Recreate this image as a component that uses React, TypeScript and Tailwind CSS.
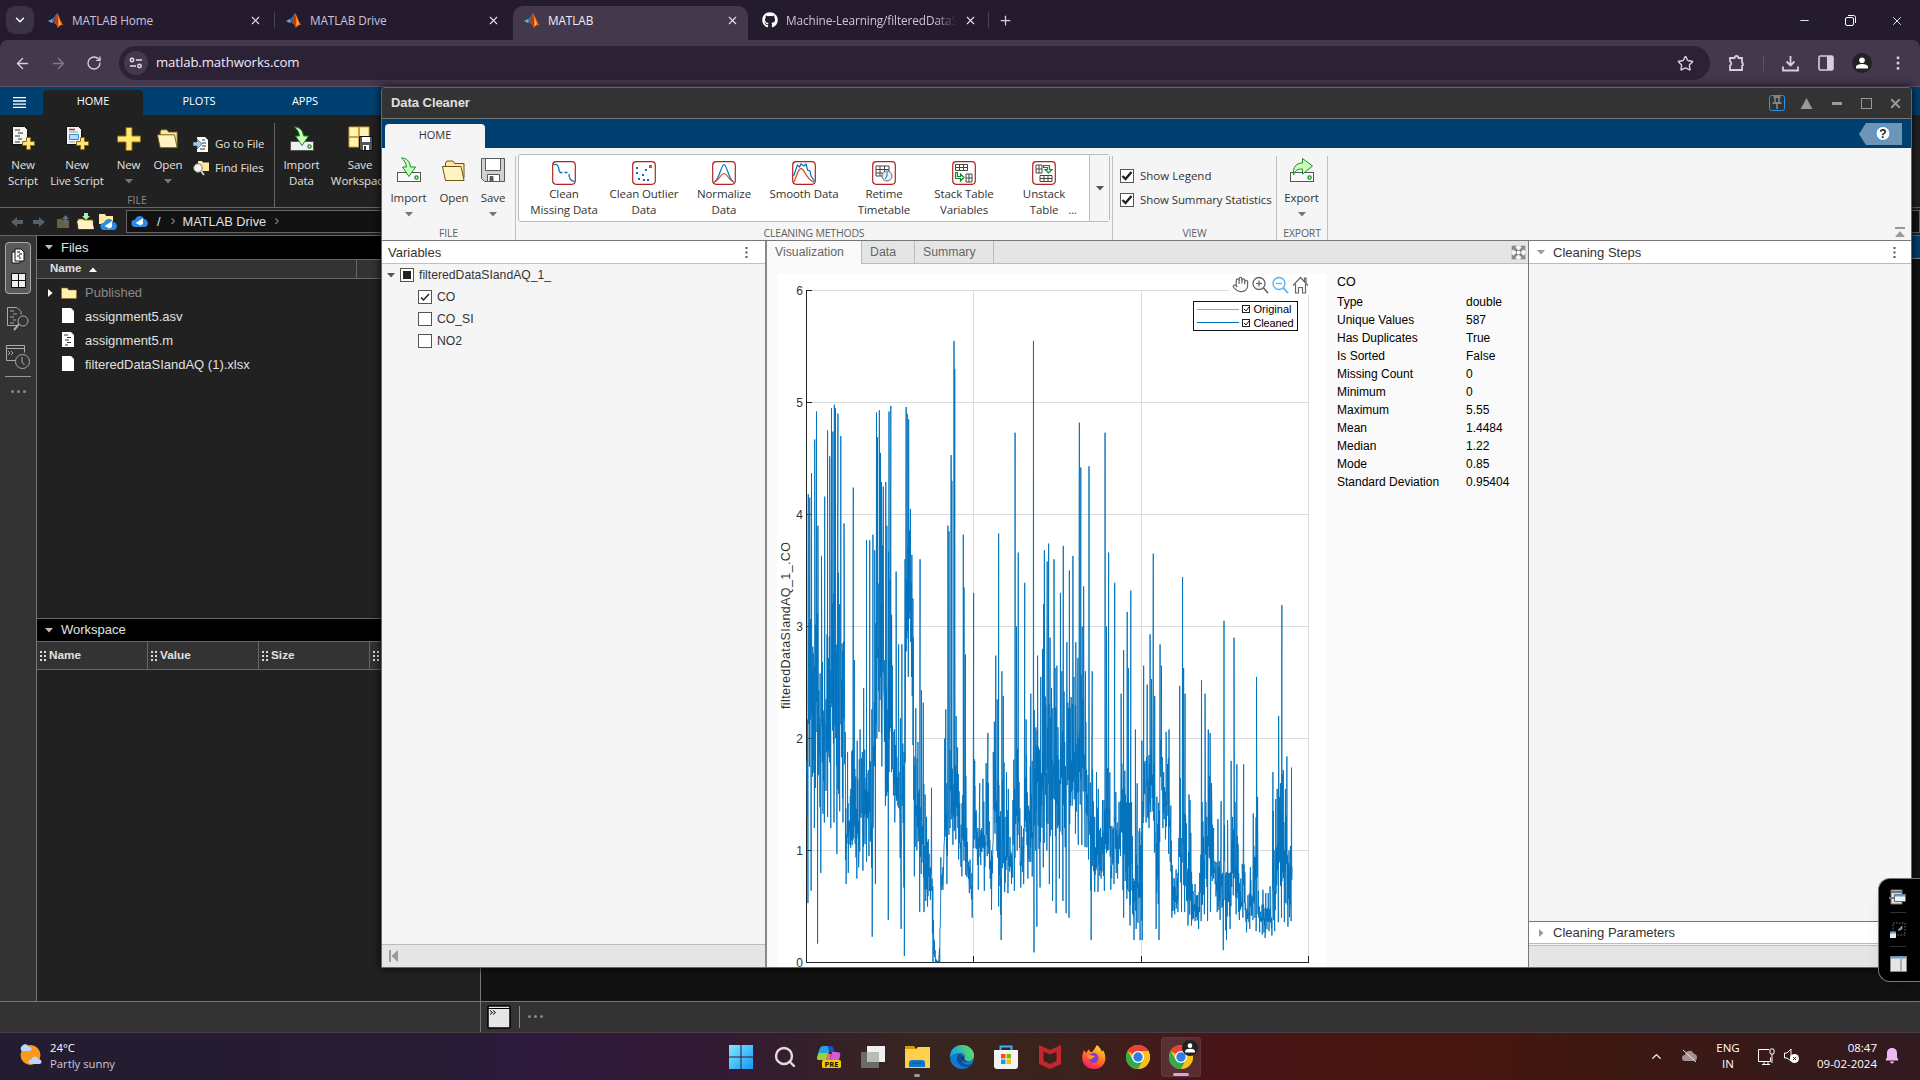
import React from "react";
import {
  ArrowLeft, ArrowRight, RotateCw, Star, X, Plus, ChevronDown, ChevronUp, MoreVertical, Minus,
  Search, Hand,
} from "lucide-react";
import { FaGithub } from "react-icons/fa";

const SEGOE = "font-['Open_Sans',sans-serif]";
const ARIAL = "font-['Liberation_Sans',sans-serif]";

/* ---------- chart data ---------- */

// [x, value] pairs: local maxima, x in plot units measured from 102 to 1462
const PEAKS: number[] = [
  103, 1.8, 107, 4.18, 111, 4.15, 116, 4.37, 121, 2.76, 125, 4.67, 130, 4.92, 134, 3.9, 140, 2.58, 144, 3.63, 149, 2.25, 153, 4.16, 157, 2.35, 161, 4.75, 167, 4.52, 172, 4.95, 176, 4.74,
  180, 4.98, 183, 4.95, 190, 4.9, 194, 3.2, 198, 4.7, 203, 2.78, 207, 3.92, 211, 2, 217, 1.88, 226, 1.55, 233, 4.24, 236, 2.7, 240, 1.66, 244, 1.98, 252, 2.08, 262, 2.45, 265, 1.9, 270, 3.77, 275, 1.72,
  279, 3.77, 285, 2.26, 288, 3.82, 293, 3.68, 298, 4.91, 301, 4.69, 306, 4.93, 309, 4.55, 312, 4.29, 317, 4.25, 321, 2.7, 324, 4.29, 327, 3.9, 333, 4.92, 338, 4.97, 342, 2.6, 348, 2.08, 353, 3.49, 360, 2.84, 365, 2.18, 369, 2.84,
  375, 1.88, 378, 3.6, 381, 4.96, 384, 4.9, 388, 4.85, 393, 4.05, 397, 3.64, 400, 3.25, 408, 2.27, 414, 1.97, 420, 3.6, 424, 2.43, 429, 2.32, 434, 1.5, 438, 1.3, 443, 1.1, 452, 1.56, 457, 0.38, 462, 0.1, 466, 0.02, 472, 0.02, 478, 0.94,
  484, 0.85, 489, 2, 492, 2.26, 495, 1.6, 498, 3.9, 501, 3.85, 507, 4.53, 509, 4.3, 515, 5.55, 517, 5.3, 521, 2.2, 525, 1.92, 531, 1.42, 535, 1.23, 541, 3.82, 543, 3.35, 547, 2.75, 551, 1.2, 556, 0.9, 560, 0.92, 565, 0.8, 570, 3.3, 573, 1.8,
  577, 1.36, 582, 1.2, 587, 1.6, 592, 1.2, 596, 1.64, 605, 1.78, 610, 2.05, 614, 1.26, 620, 1, 625, 1.88, 628, 2.15, 632, 2.74, 636, 2.35, 640, 3.83, 645, 1.35, 649, 2.6, 653, 2.38, 658, 1.3, 662, 1.7, 667, 1.55, 672, 1.12, 680, 1.45,
  686, 4.73, 690, 3, 695, 3.66, 699, 1.2, 704, 1.22, 708, 1.12, 713, 3.39, 717, 2.17, 724, 1.4, 730, 2.4, 734, 1.8, 737.5, 5.55, 740, 2.25, 744, 2.1, 749, 2.74, 754, 1.9, 758, 2.55, 763, 2.8, 766, 3.2, 768, 3.68, 772, 2.3, 776, 3.58, 780, 3.74, 784, 2.9,
  788, 2.45, 795, 3.6, 798, 2.63, 803, 2.65, 806, 2.1, 813, 3.3, 817, 2.6, 821, 3.72, 825, 1.97, 831, 2.86, 838, 3.5, 843, 2.37, 848, 3.63, 851, 2.55, 856, 2.86, 862, 2.72, 866, 4.82, 870, 4.42, 874, 3, 878, 3.36, 883, 2.6, 888, 1.5,
  893, 4.43, 897, 1.38, 902, 2.6, 905, 1.3, 909, 1.3, 914, 1.7, 919, 1.55, 925, 1.2, 931, 1.45, 935, 1.45, 938, 4.73, 942, 3, 948, 3.66, 953, 1.2, 957, 1.22, 965, 3.39, 968, 1.3, 972, 1.25, 977, 1.43, 983, 2.4, 990, 2.79, 995, 1.5,
  1000, 3.13, 1003, 2.63, 1010, 3.32, 1014, 0.96, 1018, 0.75, 1023, 2.08, 1028, 1.6, 1035, 1.2, 1041, 1.98, 1046, 2.65, 1050, 1.8, 1056, 2.48, 1061, 1.85, 1064, 2.93, 1068, 2.53, 1073, 3.65, 1077, 2.38, 1083, 1.48, 1092, 2.84, 1096, 2.65,
  1102, 1.7, 1109, 2.06, 1117, 2.08, 1122, 1.4, 1126, 0.87, 1132, 0.75, 1137, 0.83, 1142, 0.8, 1147, 2.47, 1151, 0.8, 1155, 3.44, 1158, 2.63, 1162, 2.4, 1167, 0.8, 1173, 1.5, 1176, 1.45, 1182, 0.7, 1190, 0.7, 1197, 0.6, 1203, 0.8,
  1208, 2.52, 1212, 1.26, 1218, 2.4, 1223, 1.3, 1227, 2.08, 1232, 2.05, 1236, 1.6, 1242, 1.2, 1248, 0.9, 1254, 1.28, 1259, 0.85, 1263, 1.44, 1267, 0.8, 1271, 3.05, 1276, 0.8, 1281, 1.27, 1286, 0.8, 1291, 1.8, 1295, 1.3, 1299, 2.9,
  1303, 1, 1307, 1.77, 1312, 0.8, 1318, 0.75, 1322, 0.88, 1326, 1.77, 1330, 0.7, 1338, 0.6, 1345, 0.85, 1349, 0.6, 1353, 1.33, 1357, 0.9, 1362, 2.55, 1366, 0.85, 1370, 0.5, 1380, 0.65, 1388, 0.62, 1395, 0.62, 1400, 0.68, 1404, 0.4, 1408, 1.7,
  1412, 0.7, 1416, 1.46, 1420, 1.55, 1424, 2.2, 1429, 1.6, 1433, 3.19, 1437, 1.72, 1443, 1.55, 1447, 1.84, 1453, 1, 1457, 1.04, 1460, 1.74,
];

// [x, value] pairs: local minima
const LOWS: number[] = [
  102, 1.7, 106, 0.53, 115, 0.64, 124, 1.2, 133, 0.17, 142, 0.8, 152, 1.25, 161, 1.3, 170, 1.2, 179, 1.25, 187, 0.97, 195, 1.35, 204, 1.25, 213, 0.7, 219, 0.8, 230, 1.05, 243, 0.75, 248, 0.85, 260, 0.82, 270, 0.9, 277, 0.95,
  286, 0.23, 288, 1.2, 295, 0.7, 299, 2, 305, 2.06, 313, 1.75, 323, 1.4, 331, 0.38, 333, 1.7, 340, 1.7, 349, 1.25, 358, 1.4, 367, 0.3, 370, 1.5, 376, 0.06, 379, 2.4, 387, 2.55, 396, 2.55, 404, 0.77, 411, 1, 419, 0.45, 431, 0.45, 441, 0.5,
  449, 0.56, 456, 0, 464, 0, 475, 0, 477, 0.42, 484, 0.65, 495, 0.7, 504, 1.2, 512, 1.05, 520, 1.1, 528, 0.92, 537, 0.77, 548, 0.78, 558, 0.62, 566, 0.4, 573, 1.1, 583, 0.65, 590, 0.87, 600, 0.64, 608, 0.95, 620, 0.47, 630, 1.15, 640, 0.5,
  647, 0.2, 651, 0.85, 657, 0.63, 666, 0.62, 676, 0.7, 684, 0.64, 692, 1, 702, 0.67, 710, 0.7, 722, 0.75, 730, 0.9, 739, 0.09, 743, 1, 747, 0.32, 756, 0.67, 765, 0.85, 775, 1, 782, 0.7, 791, 0.55, 801, 0.44, 810, 0.75, 820, 0.55, 829, 0.44,
  837, 0.4, 841, 1.4, 846, 1.4, 855, 1.15, 863, 1.05, 873, 1.05, 882, 1.03, 892, 0.92, 899, 0.2, 903, 0.9, 909, 0.63, 918, 0.63, 927, 0.75, 936, 0.64, 945, 1, 954, 0.65, 963, 0.7, 973, 0.75, 981, 0.95, 990, 0.4, 999, 0.57, 1008, 0.33,
  1019, 0.2, 1025, 0.3, 1036, 0.2, 1042, 0.2, 1046, 1.3, 1053, 1.25, 1061, 1.2, 1072, 1.35, 1081, 0.3, 1089, 0.2, 1094, 1.7, 1100, 1.2, 1107, 1.1, 1116, 0.97, 1125, 0.4, 1133, 0.43, 1142, 0.45, 1152, 0.45, 1161, 0.45, 1170, 0.33, 1180, 0.33,
  1190, 0.37, 1200, 0.3, 1207, 0.37, 1216, 0.43, 1225, 0.37, 1233, 0.45, 1242, 0.75, 1252, 0.45, 1260, 0.38, 1269, 0.11, 1278, 0.2, 1288, 0.3, 1297, 0.6, 1305, 0.43, 1314, 0.38, 1324, 0.4, 1334, 0.27, 1343, 0.3, 1352, 0.38, 1361, 0.28,
  1371, 0.27, 1378, 0.25, 1386, 0.22, 1397, 0.28, 1405, 0.24, 1413, 0.28, 1423, 0.36, 1432, 0.4, 1440, 0.36, 1450, 0.32, 1459, 0.37,
];

function sample(points: number[], x: number) {
  for (let i = 2; i < points.length; i += 2) {
    if (x <= points[i]) {
      const t = (x - points[i - 2]) / (points[i] - points[i - 2]);
      return points[i - 1] + (points[i + 1] - points[i - 1]) * Math.max(0, t);
    }
  }
  return points[points.length - 1];
}

function buildSeries() {
  let seed = 7;
  const rand = () => ((seed = (seed * 16807) % 2147483647) / 2147483647);
  const pts: [number, number][] = [];
  for (let x = 104; x < 1461; x += 2.1) {
    const early = x < 210 || (x > 290 && x < 345) || (x > 378 && x < 402);
    const busy = x > 735 && x < 885;
    const cap = early ? 4.2 : busy ? 2.9 : 2.1;
    const floor = early ? 1.2 : busy ? 0.9 : 0;
    const lo = Math.max(floor, sample(LOWS, x));
    const hi = Math.min(cap, sample(PEAKS, x));
    const span = Math.max(0, hi - lo);
    pts.push([x, lo + span * (0.08 + 0.32 * rand())]);
    pts.push([x + 1, lo + span * (0.35 + 0.5 * rand())]);
  }
  for (let i = 0; i < PEAKS.length; i += 2) pts.push([PEAKS[i], PEAKS[i + 1]]);
  for (let i = 0; i < LOWS.length; i += 2) pts.push([LOWS[i], LOWS[i + 1]]);
  pts.sort((a, b) => a[0] - b[0]);
  return pts.map(([x, v]) => `${((x - 102) / 2.8 + 29.5).toFixed(2)},${(688.5 - v * 112).toFixed(1)}`).join(" ");
}

function Chart() {
  return (
    <svg width="549" height="693" className="block" fontFamily="Liberation Sans" fontSize="12" fill="#333">
      <g stroke="#dcdcdc" strokeWidth="1">
        {[1, 2, 3, 4, 5].map((v) => <line key={v} x1="30" x2="531" y1={688.5 - v * 112} y2={688.5 - v * 112} />)}
        <line x1="30" x2="452" y1="16.5" y2="16.5" />
        <line x1="196.5" x2="196.5" y1="16" y2="688" />
        <line x1="364.5" x2="364.5" y1="16" y2="688" />
        <line x1="531.5" x2="531.5" y1="21" y2="688" />
      </g>
      <g stroke="#222" strokeWidth="1">
        <path d="M29.500 16V688.500H532M196.500 688v-6M364.500 688v-6M531.500 688v-6" fill="none" />
        {[1, 2, 3, 4, 5, 6].map((v) => <line key={v} x1="29" x2="35" y1={688.5 - v * 112} y2={688.5 - v * 112} />)}
      </g>
      <polyline points={buildSeries()} fill="none" stroke="#0072bd" strokeWidth="0.9" strokeLinejoin="bevel" />
      {[0, 1, 2, 3, 4, 5, 6].map((v) => <text key={v} x="26" y={693 - v * 112} textAnchor="end">{v}</text>)}
      <text transform="translate(12.500 435) rotate(-90)" fontSize="12.500" textLength="167">filteredDataSIandAQ_1_.CO</text>
      <rect x="416.500" y="27.500" width="104" height="29" fill="#fff" stroke="#111" />
      <line x1="420" x2="462" y1="35.500" y2="35.500" stroke="#4dbeee" />
      <line x1="420" x2="462" y1="48.500" y2="48.500" stroke="#0072bd" />
      {[31.5, 45.5].map((y) => (
        <g key={y} fill="none" stroke="#222" strokeWidth="1">
          <rect x="465.500" y={y} width="7" height="7" />
          <path d={`M467 ${y + 3.5}l2 2 3-4`} />
        </g>
      ))}
      <text x="476.500" y="39" fontSize="11" textLength="38" fill="#000">Original</text>
      <text x="476.500" y="53" fontSize="11" textLength="40" fill="#000">Cleaned</text>
    </svg>
  );
}

/* ---------- small pieces ---------- */

const MatlabLogo = () => (
  <svg width="16" height="16" viewBox="0 0 16 16">
    <path d="M0 9l4-2 2 2-2 2z" fill="#5ab5e0" />
    <path d="M4 7c2-1 2-2 5-6L6 9l-2 2z" fill="#2f7fb0" />
    <path d="M9 1c2 2 3 8 6.500 12-3-1-4 2-6 3 0-3-2-4-3.500-5C7 9 8 4 9 1z" fill="#e8701c" />
    <path d="M9 1c1 4 2 9 .500 15C9 12 8 12 6 11c1-3 2-6 3-10z" fill="#c03a1a" />
    <path d="M10 4c1 3 2 5 2.500 8l-2 2c.500-3 .300-7-.500-10z" fill="#fbc34a" />
  </svg>
);

const PersonIcon = ({ size }: { size: number }) => (
  <svg width={size} height={size} viewBox="0 0 12 12" fill="#fff"><circle cx="6" cy="3.200" r="2.800" /><path d="M0 11.500V10c0-4 12-4 12 0v1.500z" /></svg>
);

const MagnifierIcon = ({ plus, color }: { plus?: boolean; color: string }) => (
  <svg width="17" height="18" viewBox="0 0 17 18" fill="none" stroke={color} strokeWidth="1.300">
    <circle cx="7" cy="7.500" r="6" /><path d="M4 7.500h6" /><path d="M11.500 12l4.500 5" strokeWidth="1.800" />
    {plus && <path d="M7 4.500v6" />}
  </svg>
);

const HomeIcon = () => (
  <svg width="17" height="18" viewBox="0 0 17 18" fill="none" stroke="#666" strokeWidth="1.200">
    <path d="M1 9.500L8.500 1.500l7.500 8M12.500 5.500V2h1.500v5M3.500 8v9h3v-5.500h4V17h3V8" />
  </svg>
);

const Caret = ({ className = "text-[#555]" }: { className?: string }) => (
  <svg width="8" height="5" viewBox="0 0 8 5" className={className}><path d="M0 0h8L4 4.600z" fill="currentColor" /></svg>
);

const PageIcon = ({ kind }: { kind: "script" | "live" }) => (
  <svg width="24" height="24" viewBox="0 0 24 24">
    <path d="M1.500.500h12l3 3v15h-15z" fill="#f4f4f4" stroke="#111" />
    {kind === "script" ? (
      <path d="M4 4h5M7 7h5M4 10h5M7 13h4M4 16h5" stroke="#333" />
    ) : (
      <>
        <path d="M4 3.500h6" stroke="#b02020" strokeWidth="1.500" />
        <path d="M4 6h9M4 16h6" stroke="#999" />
        <path d="M4.500 8.500h9v5h-9z" fill="#b7dcf8" stroke="#3a8dd0" />
      </>
    )}
    <path d="M15.500 11.500h4v4h4v4h-4v4h-4v-4h-4v-4h4z" fill="#ffe872" stroke="#8a6a10" />
  </svg>
);

const FolderIcon = ({ size = 26 }: { size?: number }) => (
  <svg width={size} height={size} viewBox="0 0 26 26">
    <path d="M4.500 21V6l1.500-2h6l1.500 2.500H23V21z" fill="#ffe9a0" stroke="#6f5510" />
    <path d="M4.500 23.500L1.500 9.500H20l3 14z" fill="#fff3c4" stroke="#6f5510" />
  </svg>
);

const ImportIcon = ({ dark }: { dark?: boolean }) => (
  <svg width="26" height="26" viewBox="0 0 26 26">
    <rect x="1.500" y="15.500" width="23" height="9" fill={dark ? "#f0f0f0" : "#fafafa"} stroke="#555" />
    <circle cx="20.500" cy="20.500" r="1.600" fill="none" stroke="#1a8a1a" strokeWidth="1.300" />
    <path d="M5.500 1c5 0 8 3 9 9h5L13 19.500 6.500 10h4C10 6 8.500 3.500 5.500 1z" fill="#c9ffb9" stroke="#1b8c2b" />
  </svg>
);

const ExportIcon = () => (
  <svg width="26" height="26" viewBox="0 0 26 26">
    <rect x="1.500" y="15.500" width="23" height="9" fill="#fafafa" stroke="#555" />
    <circle cx="20.500" cy="20.500" r="1.600" fill="none" stroke="#1a8a1a" strokeWidth="1.300" />
    <path d="M4.500 18c-1-8 3-12 9-12V1.500L23.500 9l-10 8v-5c-5 0-7 1-9 6z" fill="#c9ffb9" stroke="#1b8c2b" />
  </svg>
);

const SaveIcon = () => (
  <svg width="26" height="26" viewBox="0 0 26 26" fill="none" stroke="#5a5a5a">
    <path d="M1.500 1.500h23v23h-20l-3-3z" fill="#d0d0d0" />
    <path d="M5.500 1.500h15v12h-15z" fill="#fff" />
    <path d="M7.500 17.500h12v7h-12z" fill="#fff" />
    <path d="M10 19.500h3v5h-3z" fill="#5a5a5a" />
  </svg>
);

const PlusIcon = () => (
  <svg width="26" height="26" viewBox="0 0 26 26">
    <path d="M10 1.500h6V10h8.500v6H16v8.500h-6V16H1.500v-6H10z" fill="#ffe872" stroke="#8a6a10" />
  </svg>
);

const WorkspaceIcon = () => (
  <svg width="26" height="26" viewBox="0 0 26 26">
    <path d="M2 1h20v20H2z" fill="#fff3b0" stroke="#caa040" />
    <path d="M12 1v20M2 11h20" stroke="#caa040" strokeWidth="2" />
    <path d="M12.500 10.500h13v14H14l-1.500-1.500z" fill="#555" stroke="#111" />
    <path d="M15 11h8v5h-8zM16 19h6v5h-6z" fill="#fff" />
    <path d="M17 20h2v4h-2z" fill="#333" />
  </svg>
);

const FileSheet = ({ script }: { script?: boolean }) => (
  <svg width="12" height="15" viewBox="0 0 12 15" className="mb-[3px]">
    <path d="M0 0h9l3 3v12H0z" fill="#fff" />
    {script && <path d="M2 3h4M5 5.500h4M3 8h4M5 10.500h4M3 13h3" stroke="#333" />}
  </svg>
);

const CloudIcon = ({ className = "" }: { className?: string }) => (
  <svg width="18" height="13" viewBox="0 0 18 13" className={className}>
    <path d="M4 12a3.600 3.600 0 010-7.300C5 .500 11.500-.700 13 4c5 .500 5 7.500 1 8z" fill="#2b8be6" />
    <path d="M4.500 8l2.500-1.500L12 3v6l-3 1.500-1.500-1z" fill="#fff" />
  </svg>
);

const Grip = () => (
  <svg width="8" height="10" viewBox="0 0 8 10" fill="#ddd">
    {[0, 4, 8].map((y) => [0, 4].map((x) => <rect key={`${x}-${y}`} x={x} y={y} width="2" height="2" />))}
  </svg>
);

const Kebab = () => (
  <svg width="3" height="12" viewBox="0 0 3 12" fill="#555"><path d="M.500 0h2v2h-2zM.500 4.500h2v2h-2zM.500 9h2v2h-2z" /></svg>
);

const CheckBox = ({ state }: { state?: "on" | "mixed" | "bold" }) => (
  <svg width="14" height="14" viewBox="0 0 14 14" className="shrink-0">
    <rect x=".500" y=".500" width="13" height="13" fill="#fff" stroke="#555" />
    {state === "on" && <path d="M3 7.500L5.500 10 11 4" fill="none" stroke="#222" strokeWidth="1.500" />}
    {state === "bold" && <path d="M2.500 7L5.500 10 11.500 3" fill="none" stroke="#222" strokeWidth="2.400" />}
    {state === "mixed" && <rect x="3" y="3" width="8" height="8" fill="#222" />}
  </svg>
);

type BtnProps = { icon: React.ReactNode; lines: string[]; w: string; caret?: boolean; gap?: string };
const RibbonButton = ({ icon, lines, w, caret, gap = "h-[33px]" }: BtnProps) => (
  <div className={`flex shrink-0 flex-col items-center text-[11.5px] leading-4 whitespace-nowrap ${w}`}>
    <div className={`flex items-start ${gap}`}>{icon}</div>
    {lines.map((l) => <div key={l} className="tracking-[-0.1px]">{l}</div>)}
    {caret && <Caret className="mt-[6px] text-[#777]" />}
  </div>
);

const GalleryIcon = ({ children }: { children: React.ReactNode }) => (
  <svg width="24" height="24" viewBox="0 0 24 24" fill="none">
    <rect x=".700" y=".700" width="22.600" height="22.600" rx="3.500" fill="#fff" stroke="#b22222" strokeWidth="1.200" />
    {children}
  </svg>
);

const Table = ({ x, y }: { x: number; y: number }) => (
  <path d={`M${x} ${y}h12v6h-12zM${x} ${y + 3}h12M${x + 4} ${y}v6M${x + 8} ${y}v6`} stroke="#444" />
);

const GALLERY: { lines: string[]; art: React.ReactNode }[] = [
  { lines: ["Clean", "Missing Data"], art: <><path d="M1.500 4c4-2 5 1 6 7M17 13c0 4 2 7 5.500 7.500" stroke="#0072bd" strokeWidth="1.300" /><path d="M7.500 11.500H17" stroke="#0072bd" strokeWidth="1.700" strokeDasharray="3 2" /></> },
  { lines: ["Clean Outlier", "Data"], art: <><path d="M4 6h2v2H4zM4 11h2v2H4zM6 17h2v2H6zM11 18h2v2h-2zM15 18h2v2h-2zM10 13h2v2h-2zM13 8h2v2h-2z" fill="#0072bd" /><path d="M17 4h3v3h-3z" fill="#d95319" /></> },
  { lines: ["Normalize", "Data"], art: <><path d="M2 21C7 20 9 4 12 3.500 15 4 17 20 22 21" stroke="#0072bd" strokeWidth="1.200" /><path d="M2 21c4-1 7-8 10-8.500 3 .500 6 7.500 10 8.500" stroke="#d95319" strokeWidth="1.200" /></> },
  { lines: ["Smooth Data"], art: <><path d="M1.500 15l4-11 2 2 1.500-3 3 2 2-2 1.500 6 2.500 1 1 5 3.500 5" stroke="#0072bd" strokeWidth="1.200" /><path d="M2 21C5 14 6 8 9 7.500s6 12 13 13.500" stroke="#d95319" strokeWidth="1.300" /></> },
  { lines: ["Retime", "Timetable"], art: <><path d="M4 5h13v10H4zM4 8.500h13M4 12h13M8 5v10M12.500 5v10" stroke="#444" /><circle cx="15" cy="15" r="5" fill="#e8f2fa" stroke="#666" /><path d="M15 11v4l-2 3" stroke="#0072bd" /></> },
  { lines: ["Stack Table", "Variables"], art: <><Table x={3.5} y={3.5} /><path d="M14 13h6v8h-6zM14 17h6M17 13v8" stroke="#444" /><path d="M3.500 11.500h2v4h3v-2.500l3.500 3.500-3.500 3.500V17.500h-5z" stroke="#12872a" strokeWidth="1.200" fill="#eafbe6" /></> },
  { lines: ["Unstack", "Table"], art: <><path d="M4 4h6v8H4zM4 8h6M7 4v8" stroke="#444" /><Table x={8} y={14.5} /><path d="M11.500 4.500h6v4h2.500l-3.500 3.500-3.500-3.500h2.500v-2h-4z" stroke="#12872a" strokeWidth="1.200" fill="#eafbe6" /></> },
];

const Sep = ({ className = "bg-[#c0c0c0]" }: { className?: string }) => <div className={`w-px shrink-0 ${className}`} />;

/* ---------- browser chrome ---------- */

function Tab({ title, icon, active, w, pad = "pl-2" }: { title: string; icon: React.ReactNode; active?: boolean; w: string; pad?: string }) {
  return (
    <div className={`mt-[6px] flex h-[34px] shrink-0 items-center ${pad} ${w} ${active ? "rounded-t-[10px] bg-[#43384c] text-[#f3ecf8]" : "text-[#cfc3da]"}`}>
      <span className="flex w-6 shrink-0 items-center pb-[6px]">{icon}</span>
      <span className={`pb-[4px] text-[11.8px] tracking-[-0.1px] whitespace-nowrap ${title.length > 20 ? "w-[170px] overflow-hidden [mask-image:linear-gradient(90deg,#000_88%,transparent)]" : ""}`}>{title}</span>
      <X size={13} strokeWidth={2} className="mr-[9px] mb-[5px] ml-auto shrink-0 text-[#e6dcee]" />
    </div>
  );
}

function BrowserChrome() {
  return (
    <div className={`h-[87px] bg-[#241b2e] ${SEGOE}`}>
      <div className="flex h-10">
        <div className="mt-[6px] ml-[6px] flex h-7 w-7 items-center justify-center rounded-[9px] bg-[#3c3247] text-white"><ChevronDown size={14} strokeWidth={2.5} /></div>
        <Tab title="MATLAB Home" icon={<MatlabLogo />} w="w-[237px]" pad="pl-[14px]" />
        <div className="mt-3 ml-[3px] h-4 w-px bg-[#4c4058]" />
        <Tab title="MATLAB Drive" icon={<MatlabLogo />} w="w-[234px]" pad="pl-[11px]" />
        <div className="w-[4px]" />
        <Tab title="MATLAB" icon={<MatlabLogo />} active w="w-[235px]" pad="pl-[11px]" />
        <div className="w-[6px]" />
        <Tab title="Machine-Learning/filteredDataSIandAQ" icon={<FaGithub size={16} color="#fff" />} w="w-[232px]" />
        <div className="mt-3 ml-[2px] h-4 w-px bg-[#4c4058]" />
        <Plus size={15} className="mt-[13px] ml-[9px] text-[#d8cbe4]" />
        <div className="mt-[14px] ml-auto flex gap-[33px] pr-4 text-white">
          <Minus size={13} strokeWidth={1.6} />
          <svg width="13" height="13" viewBox="0 0 13 13" fill="none" stroke="currentColor"><rect x="1.500" y="3.500" width="8" height="8" rx="1.500" /><path d="M4 1.500h5.500a2 2 0 012 2V9" /></svg>
          <X size={14} strokeWidth={1.5} />
        </div>
      </div>
      <div className="flex h-[47px] items-center rounded-t-[8px] border-b border-[#5c5266] bg-[#43384c] text-[#d9cce6]">
        <ArrowLeft size={17} className="ml-[14px]" />
        <ArrowRight size={17} className="ml-[19px] text-[#857990]" />
        <RotateCw size={16} className="ml-[19px]" />
        <div className="ml-[17px] flex h-[34px] w-[1591px] items-center rounded-full bg-[#2c2236]">
          <div className="ml-[5px] flex h-6 w-6 items-center justify-center rounded-full bg-[#43384c]">
            <svg width="14" height="12" viewBox="0 0 14 12" fill="none" stroke="#e6dcee" strokeWidth="1.500"><circle cx="3" cy="3" r="1.700" /><path d="M7 3h6M1 9h6" /><circle cx="10.500" cy="9" r="1.700" /></svg>
          </div>
          <span className="ml-2 text-[13.200px] tracking-[-0.100px] text-[#f1e9f7]">matlab.mathworks.com</span>
          <Star size={17} className="mr-[16px] ml-auto" />
        </div>
        <svg width="18" height="18" viewBox="0 0 18 18" fill="none" stroke="currentColor" strokeWidth="1.800" className="ml-[18px]"><path d="M2 4h4.500a2 2 0 014 0H14v4.500a2 2 0 010 3.500v4H2v-4.500a2.200 2.200 0 000-4z" /></svg>
        <div className="ml-[17px] h-4 w-px bg-[#5e5269]" />
        <svg width="17" height="17" viewBox="0 0 17 17" fill="none" stroke="currentColor" strokeWidth="1.800" className="ml-[18px]"><path d="M8.500 1v9M4.500 6.500l4 4 4-4M1 11.500v4h15v-4" /></svg>
        <svg width="16" height="16" viewBox="0 0 16 16" className="ml-[19px]"><rect x="1" y="1" width="14" height="14" rx="1.500" fill="none" stroke="currentColor" strokeWidth="1.600" /><path d="M9 1h6v14H9z" fill="currentColor" /></svg>
        <div className="ml-[18px] flex h-5 w-5 items-center justify-center rounded-full bg-[#222]"><PersonIcon size={12} /></div>
        <MoreVertical size={18} className="ml-[17px]" />
      </div>
    </div>
  );
}

/* ---------- MATLAB desktop ---------- */

const FILES = [
  { name: "assignment5.asv" },
  { name: "assignment5.m", script: true },
  { name: "filteredDataSIandAQ (1).xlsx" },
];

function MatlabDesktop() {
  return (
    <div className={`flex h-[945px] flex-col bg-[#212121] text-[#e0e0e0] ${ARIAL}`}>
      <div className={`flex h-7 shrink-0 items-end bg-[#004071] text-[11px] leading-[22px] text-white ${SEGOE}`}>
        <div className="flex h-7 w-[43px] items-center pt-[2px] pl-[13px]"><svg width="13" height="11" viewBox="0 0 13 11" stroke="#fff" strokeWidth="1.300"><path d="M0 .700h13M0 4h13M0 7.200h13M0 10.400h13" /></svg></div>
        <div className="h-[25px] w-[100px] rounded-t-sm bg-[#212121] text-center">HOME</div>
        <div className="h-[25px] w-[112px] text-center">PLOTS</div>
        <div className="h-[25px] w-[100px] text-center">APPS</div>
      </div>
      <div className={`flex h-[93px] shrink-0 border-b border-[#666] pt-2 ${SEGOE}`}>
        <div className="flex w-[274px] flex-col">
          <div className="flex h-[72px] pt-[3px]">
            <RibbonButton w="w-[46px]" gap="h-[31px]" icon={<PageIcon kind="script" />} lines={["New", "Script"]} />
            <RibbonButton w="w-[62px]" gap="h-[31px]" icon={<PageIcon kind="live" />} lines={["New", "Live Script"]} />
            <RibbonButton w="w-[41px]" gap="h-[31px]" icon={<PlusIcon />} lines={["New"]} caret />
            <RibbonButton w="w-[38px]" gap="h-[31px]" icon={<FolderIcon size={24} />} lines={["Open"]} caret />
            <div className="flex flex-col gap-1 pt-[8px] pl-[6px] text-[11.500px]">
              <div className="flex h-5 items-center gap-[6px]">
                <svg width="16" height="17" viewBox="0 0 16 17"><path d="M4 1h8l3 3v12H4z" fill="#fff" /><path d="M9 4h3M9 7h4M9 10h4M7 13h5" stroke="#333" /><path d="M0 6h4V3l5 5-5 5v-3H0z" fill="#9ccdf5" stroke="#234" strokeWidth=".600" /></svg>
                <span className="tracking-[-0.100px] whitespace-nowrap">Go to File</span>
              </div>
              <div className="flex h-5 items-center gap-[6px]">
                <svg width="16" height="16" viewBox="0 0 16 16"><path d="M5 1h4l1 1.500h6V11H5z" fill="#ffe9a0" /><circle cx="5" cy="8" r="4.300" fill="#f4f4f4" stroke="#777" /><path d="M8 11l3 4" stroke="#ccc" strokeWidth="2" /></svg>
                <span className="tracking-[-0.100px] whitespace-nowrap">Find Files</span>
              </div>
            </div>
          </div>
          <div className="text-center text-[10.500px] leading-[11px] text-[#8a8a8a]">FILE</div>
        </div>
        <Sep className="bg-[#666]" />
        <div className="flex pt-[3px]">
          <RibbonButton w="w-[53px]" gap="h-[31px]" icon={<ImportIcon dark />} lines={["Import", "Data"]} />
          <RibbonButton w="w-[64px]" gap="h-[31px]" icon={<WorkspaceIcon />} lines={["Save", "Workspace"]} />
        </div>
      </div>
      <div className="flex h-7 shrink-0 items-center border-b border-[#666]">
        <svg width="34" height="12" viewBox="0 0 34 12" fill="#54606a" className="ml-[11px]"><path d="M0 6l6-5v3h6v4H6v3zM34 6l-6-5v3h-6v4h6v3z" /></svg>
        <svg width="14" height="15" viewBox="0 0 14 15" className="ml-[12px]"><path d="M0 5h5l1 1h6v8H0z" fill="#6a604a" /><path d="M8.500 1L12 5H9.500v4h-2V5H5z" fill="#607080" /></svg>
        <svg width="18" height="17" viewBox="0 0 18 17" className="ml-[6px]"><path d="M1 6h5l1 1h9v9H1z" fill="#ffe9a0" stroke="#7a6520" strokeWidth=".700" /><path d="M0 8h15l2 8H2z" fill="#fff3c4" /><path d="M7 0h4v3h2L9 7 5 3h2z" fill="#a8f0a0" /></svg>
        <div className="relative ml-[4px] h-[17px] w-[18px]">
          <svg width="14" height="12" viewBox="0 0 14 12"><path d="M0 1h6l1 2h7v8H0z" fill="#ffe9a0" /></svg>
          <CloudIcon className="absolute top-[5px] left-[1px]" />
        </div>
        <div className="ml-[9px] flex h-[23px] flex-1 items-center border border-[#666] bg-[#121212] text-[12.800px]">
          <CloudIcon className="ml-[4px]" />
          <span className="ml-2">/</span>
          <span className="ml-[10px] pb-[2px] text-[15px] text-[#888]">›</span>
          <span className="ml-[7px] pt-px">MATLAB Drive</span>
          <span className="ml-[8px] pb-[2px] text-[15px] text-[#888]">›</span>
        </div>
      </div>
      <div className="flex min-h-0 flex-1">
        <div className="flex w-[37px] shrink-0 flex-col items-center border-r border-[#777] bg-[#333] text-[#aaa]">
          <div className="mt-[6px] flex h-[52px] w-[26px] flex-col items-center justify-center gap-[9px] rounded border border-[#aaa] bg-[#5a5a5a]">
            <svg width="14" height="16" viewBox="0 0 14 16" fill="#fff" stroke="#111"><path d="M1 4h8v11H1z" /><path d="M4 1h6l3 3v9H4z" /><path d="M6 4h3M8 6h3M6 8h3M8 10h2" /></svg>
            <svg width="15" height="15" viewBox="0 0 15 15"><path d="M.500.500h14v14H.500zM7.500 0v15M0 7.500h15" fill="#eee" stroke="#111" /></svg>
          </div>
          <svg width="24" height="25" viewBox="0 0 24 25" fill="none" stroke="#aaa" className="mt-[12px]"><path d="M12 19.500H1.500v-18H11l4 4v3M4 5h4M7 8h4M4 11h4M7 14h3M4 17h4" /><circle cx="17" cy="15" r="5" /><path d="M13 18l-5 6" strokeWidth="2" /></svg>
          <svg width="26" height="26" viewBox="0 0 26 26" fill="none" stroke="#aaa" className="mt-[13px]"><path d="M10 16.500H1.500v-15h18v7M1 4.500h18M3 7l2 2-2 2M6 7l2 2-2 2" /><circle cx="17.500" cy="17.500" r="7" /><path d="M17 13v5l2.500 3" /></svg>
          <div className="mt-[6px] h-px w-[26px] bg-[#999]" />
          <div className="mt-[13px] flex gap-[3px]">{[0, 1, 2].map((i) => <i key={i} className="h-[3px] w-[3px] rounded-full bg-[#888]" />)}</div>
        </div>
        <div className="flex w-[443px] shrink-0 flex-col">
          <div className="flex h-[23px] items-center bg-black pl-2 text-[13px]"><Caret className="mr-2 text-[#bbb]" />Files</div>
          <div className="flex h-[20px] border-y border-[#666] bg-[#333] text-[11.500px] font-bold">
            <div className="flex w-[320px] items-center border-r border-[#666] pl-[13px]">Name
              <svg width="8" height="5" viewBox="0 0 8 5" className="ml-2"><path d="M0 5h8L4 .400z" fill="#fff" /></svg>
            </div>
          </div>
          <div className="flex h-[339px] flex-col pt-[2px] text-[13px]">
            <div className="flex h-6 items-center pl-[11px]">
              <svg width="5" height="8" viewBox="0 0 5 8"><path d="M0 0v8l4.500-4z" fill="#fff" /></svg>
              <svg width="16" height="12" viewBox="0 0 16 12" className="mr-2 ml-[8px]"><path d="M.500 1h6l1 2h8v8.500H.500z" fill="#fff0b0" stroke="#8a6a10" strokeWidth=".600" /></svg>
              <span className="text-[#8a8a8a]">Published</span>
            </div>
            {FILES.map((f) => (
              <div key={f.name} className="flex h-6 items-center pl-[25px]"><FileSheet script={f.script} /><span className="ml-[11px]">{f.name}</span></div>
            ))}
          </div>
          <div className="flex h-[23px] items-center border-t border-[#666] bg-black pl-2 text-[13px]"><Caret className="mr-2 text-[#bbb]" />Workspace</div>
          <div className="flex h-[29px] border-y border-[#666] bg-[#333] text-[11.800px] font-bold">
            {["Name", "Value", "Size", ""].map((h) => <div key={h} className="flex w-[111px] shrink-0 items-center gap-[1px] overflow-hidden border-r border-[#666] pl-[3px]"><Grip />{h}</div>)}
          </div>
        </div>
        <div className="flex flex-1 flex-col border-l border-[#777] bg-[#121212]">
          <div className="h-[23px] shrink-0 border-b border-[#888] bg-[#004071]" />
        </div>
      </div>
      <div className="flex h-[31px] shrink-0 border-t border-[#777] bg-[#333]">
        <div className="w-[481px] border-r border-[#777]" />
        <svg width="24" height="24" viewBox="0 0 24 24" className="mt-[3px] ml-[6px]"><rect x="1" y="1" width="22" height="22" rx="1" fill="#e6e6e6" stroke="#000" strokeWidth="1.500" /><path d="M1 3.500h22" stroke="#000" /><path d="M3 5.500l2.500 2-2.500 2M6 5.500l2.500 2L6 9.500" fill="none" stroke="#000" /></svg>
        <div className="mt-1 ml-[8px] h-[22px] w-px bg-[#888]" />
        <div className="mt-[13px] ml-[8px] flex gap-[3px]">{[0, 1, 2].map((i) => <i key={i} className="h-[3px] w-[3px] rounded-full bg-[#888]" />)}</div>
      </div>
    </div>
  );
}

/* ---------- Data Cleaner window ---------- */

const STATS: [string, string][] = [
  ["Type", "double"], ["Unique Values", "587"], ["Has Duplicates", "True"], ["Is Sorted", "False"], ["Missing Count", "0"], ["Minimum", "0"],
  ["Maximum", "5.55"], ["Mean", "1.4484"], ["Median", "1.22"], ["Mode", "0.85"], ["Standard Deviation", "0.95404"],
];

const SectionLabel = ({ children }: { children: string }) => (
  <div className="mt-auto text-center text-[10.500px] leading-[13px] tracking-[-0.200px] whitespace-nowrap text-[#5f5f5f]">{children}</div>
);

function Ribbon() {
  return (
    <div className={`flex h-[92px] shrink-0 bg-[#f5f5f5] text-[#333] ${SEGOE}`}>
      <div className="flex w-[133px] shrink-0 flex-col">
        <div className="flex pt-[9px]">
          <RibbonButton w="w-[53px]" icon={<ImportIcon />} lines={["Import"]} caret />
          <RibbonButton w="w-[38px]" icon={<FolderIcon />} lines={["Open"]} />
          <RibbonButton w="w-[40px]" icon={<SaveIcon />} lines={["Save"]} caret />
        </div>
        <SectionLabel>FILE</SectionLabel>
      </div>
      <Sep className="mt-2 bg-[#c0c0c0]" />
      <div className="flex w-[596px] flex-col pt-[6px]">
        <div className="ml-[2px] flex h-[68px] w-[592px] rounded-[3px] border border-[#bbb] bg-white">
          <div className="relative flex flex-1 pt-[6px] pl-[5px]">
            {GALLERY.map((g) => <RibbonButton key={g.lines[0] + g.lines[1]} w="w-[80px]" gap="h-[25px]" icon={<GalleryIcon>{g.art}</GalleryIcon>} lines={g.lines} />)}
            <span className="absolute right-[12px] bottom-[3px] text-[11px]">...</span>
          </div>
          <div className="flex w-[20px] items-center justify-center border-l border-[#bbb] bg-[#f5f5f5]"><Caret /></div>
        </div>
        <SectionLabel>CLEANING METHODS</SectionLabel>
      </div>
      <Sep className="mt-2 bg-[#c0c0c0]" />
      <div className="flex w-[163px] flex-col text-[11.500px]">
        <div className="flex flex-col gap-2 pt-5 pl-[7px]">
          <div className="flex h-4 items-center gap-[6px]"><CheckBox state="bold" />Show Legend</div>
          <div className="flex h-4 items-center gap-[6px] tracking-[-0.100px] whitespace-nowrap"><CheckBox state="bold" />Show Summary Statistics</div>
        </div>
        <SectionLabel>VIEW</SectionLabel>
      </div>
      <Sep className="mt-2 bg-[#c0c0c0]" />
      <div className="flex w-[50px] flex-col pt-[9px]">
        <RibbonButton w="w-[49px]" icon={<ExportIcon />} lines={["Export"]} caret />
        <SectionLabel>EXPORT</SectionLabel>
      </div>
      <Sep className="mt-2 bg-[#c0c0c0]" />
      <svg width="10" height="11" viewBox="0 0 10 11" fill="#999" className="mt-[79px] mr-[6px] ml-auto"><path d="M0 0h10v2H0zM5 4l5 6H0z" /></svg>
    </div>
  );
}

function DataCleaner() {
  return (
    <div className={`absolute top-[87px] left-[381px] flex h-[881px] w-[1531px] flex-col overflow-hidden rounded-t-[4px] border border-[#666] shadow-[0_0_10px_rgba(0,0,0,0.9)] ${ARIAL}`}>
      <div className="flex h-[31px] shrink-0 items-center border-b border-[#777] bg-[#333] pl-[9px] text-[13px] font-bold text-[#e0e0e0]">
        <span className="tracking-[-0.050px]">Data Cleaner</span>
        <div className="ml-auto flex items-center pr-[8px] text-[#999]">
          <svg width="16" height="16" viewBox="0 0 16 16" fill="none"><rect x=".500" y=".500" width="15" height="15" rx="2" stroke="#2b95e8" /><path d="M4.500 2h7M6 2v5M10 2v5M3.500 8h9M8 8v6" stroke="#999" strokeWidth="1.300" /></svg>
          <svg width="13" height="11" viewBox="0 0 13 12" className="ml-[15px]"><path d="M0 12h13L6.500 0z" fill="#999" /></svg>
          <div className="ml-[19px] h-[3px] w-[10px] bg-[#999]" />
          <div className="ml-[19px] h-[11px] w-[11px] border border-[#999]" />
          <X size={15} strokeWidth={3} className="ml-[16px]" />
        </div>
      </div>
      <div className="flex h-[29px] shrink-0 items-end justify-between bg-[#004071]">
        <div className={`ml-[3px] h-6 w-[100px] rounded-t-sm bg-[#f5f5f5] text-center text-[11px] leading-[22px] text-[#333] ${SEGOE}`}>HOME</div>
        <svg width="43" height="22" viewBox="0 0 43 22" className="mr-[9px] mb-[3px]"><path d="M7 0h36v22H7L0 11z" fill="#6f95b5" /><circle cx="24" cy="10.500" r="7" fill="#fff" stroke="#2b95e8" /><text x="24" y="15" textAnchor="middle" fontSize="12" fontWeight="bold" fontFamily="Liberation Sans" fill="#222">?</text></svg>
      </div>
      <Ribbon />
      <div className="flex min-h-0 flex-1 border-t border-[#777]">
        <div className="flex w-[385px] shrink-0 flex-col border-r-2 border-[#888] bg-[#f5f5f5] text-[#333]">
          <div className="flex h-[23px] shrink-0 items-center justify-between border-b border-[#c0c0c0] bg-white pt-px pr-[17px] pl-[6px] text-[13px]">Variables<Kebab /></div>
          <div className="flex flex-1 flex-col text-[12.200px]">
            <div className="flex h-[22px] items-center pl-[5px]"><Caret /><span className="ml-[5px] flex items-center gap-[5px]"><CheckBox state="mixed" />filteredDataSIandAQ_1_</span></div>
            <div className="flex h-[22px] items-center gap-[5px] pl-[36px]"><CheckBox state="on" />CO</div>
            <div className="flex h-[22px] items-center gap-[5px] pl-[36px]"><CheckBox />CO_SI</div>
            <div className="flex h-[22px] items-center gap-[5px] pl-[36px]"><CheckBox />NO2</div>
          </div>
          <div className="flex h-[23px] items-center border-t border-[#bbb] bg-[#e5e5e5] pl-[7px]"><svg width="9" height="12" viewBox="0 0 9 12" fill="#999"><path d="M0 0h2v12H0zM9 0v12L2.500 6z" /></svg></div>
        </div>
        <div className="flex w-[762px] shrink-0 flex-col border-r border-[#777] bg-[#fafafa]">
          <div className="flex h-[23px] shrink-0 bg-[#e5e5e5] text-[12.300px] leading-[22px] text-[#666]">
            <div className="w-[95px] border-r border-[#bbb] bg-[#fafafa] pl-[8px] leading-[22px]">Visualization</div>
            <div className="w-[53px] border-r border-b border-[#bbb] pl-[8px]">Data</div>
            <div className="w-[79px] border-r border-b border-[#bbb] pl-[8px]">Summary</div>
            <div className="flex flex-1 items-center justify-end border-b border-[#bbb] pr-[2px]">
              <svg width="15" height="15" viewBox="0 0 15 15" fill="#888" stroke="#888"><rect x=".500" y=".500" width="14" height="14" fill="#f5f5f5" stroke="#ddd" /><path d="M2 2l11 11M13 2L2 13" strokeWidth="2.600" /><path d="M1 1h4.500L1 5.500zM14 1v4.500L9.500 1zM1 14V9.500L5.500 14zM14 14H9.500L14 9.500z" strokeWidth=".500" /><rect x="6" y="6" width="3" height="3" fill="#f5f5f5" stroke="none" /></svg>
            </div>
          </div>
          <div className="flex min-h-0 flex-1 overflow-hidden pt-[10px] pl-[10px]">
            <div className="relative h-[693px] w-[549px] shrink-0 bg-white">
              <Chart />
              <div className="absolute top-[2px] right-[17px] flex gap-[3px] bg-white text-[#666]">
                <Hand size={17} strokeWidth={1.7} /><MagnifierIcon plus color="#666" /><MagnifierIcon color="#4db2f0" /><HomeIcon />
              </div>
            </div>
            <div className="pl-[11px] text-[12px] text-black">
              <div className="h-[19px] pt-px text-[12.500px] leading-[14px] font-medium">CO</div>
              {STATS.map(([k, v]) => <div key={k} className="flex h-[18px] items-center"><span className="w-[129px] whitespace-nowrap">{k}</span><span>{v}</span></div>)}
            </div>
          </div>
        </div>
        <div className="flex flex-1 flex-col bg-[#f5f5f5] text-[13px] text-[#333]">
          <div className="flex h-[23px] items-center border-b border-[#bbb] bg-white pt-px pr-[15px] pl-[8px]"><Caret className="mr-[8px] text-[#999]" /><span>Cleaning Steps</span><span className="ml-auto"><Kebab /></span></div>
          <div className="flex-1" />
          <div className="flex h-[23px] items-center border-y border-t-[#777] border-b-[#bbb] bg-white pl-[10px]"><svg width="5" height="8" viewBox="0 0 5 8" className="mr-[9px]"><path d="M0 0v8l4.500-4z" fill="#999" /></svg>Cleaning Parameters</div>
          <div className="mt-[1px] h-[22px] border-t border-[#bbb] bg-[#e5e5e5]" />
        </div>
      </div>
    </div>
  );
}

function Dock() {
  return (
    <div className="absolute top-[878px] left-[1878px] flex h-[104px] w-[42px] flex-col items-center rounded-l-[12px] border border-r-0 border-[#777] bg-black pt-[10px] pr-[3px] shadow-lg">
      <svg width="18" height="16" viewBox="0 0 18 16"><path d="M2 1h11v14H2z" fill="#ddd" stroke="#777" /><path d="M2 3h11M0 9h5" stroke="#777" strokeWidth="2" /><path d="M5.500 5.500h11v7h-11z" fill="#f2f2f2" stroke="#667" /><path d="M6 6.500h10" stroke="#5ba0d8" strokeWidth="2" /></svg>
      <div className="mt-[7px] h-px w-4 bg-[#333]" />
      <svg width="18" height="18" viewBox="0 0 18 18" className="mt-[9px]"><rect x="4" y="1" width="12" height="12" fill="none" stroke="#777" strokeDasharray="1.500 1.500" /><path d="M9 8l4-4v3zM9 8h3" stroke="#888" fill="#888" /><path d="M1 10h6v6H1z" fill="#e8e8e8" /><path d="M1 10.500h6" stroke="#5ba0d8" strokeWidth="2" /></svg>
      <div className="mt-[6px] h-px w-4 bg-[#333]" />
      <svg width="17" height="16" viewBox="0 0 17 16" className="mt-[9px]"><path d="M.500.500h16v15H.500z" fill="#e6e6e6" stroke="#888" /><path d="M1 1.500h15" stroke="#5ba0d8" strokeWidth="2" /><path d="M11 3v12" stroke="#777" /></svg>
    </div>
  );
}

/* ---------- taskbar ---------- */

const ChromeIcon = () => (
  <svg width="24" height="24" viewBox="0 0 24 24">
    <circle cx="12" cy="12" r="12" fill="#fbc116" />
    <path d="M12 12L1.600 6A12 12 0 0122.400 6z" fill="#ea4335" />
    <path d="M1.600 6A12 12 0 0012 24l5.200-9L12 12 6.800 15z" fill="#34a853" />
    <path d="M12 6h10.400a12 12 0 01-10.400 18l5.200-9z" fill="#fbc116" />
    <circle cx="12" cy="12" r="6" fill="#fff" /><circle cx="12" cy="12" r="4.700" fill="#2f7de9" />
  </svg>
);

const TASK_ICONS: React.ReactNode[] = [
  <svg key="win" width="24" height="24" viewBox="0 0 24 24"><defs><linearGradient id="wg" x1="0" y1="0" x2="1" y2="1"><stop stopColor="#7fe9ff" /><stop offset="1" stopColor="#1597f5" /></linearGradient></defs><path d="M0 0h11.500v11.500H0zM12.500 0H24v11.500H12.500zM0 12.500h11.500V24H0zM12.500 12.500H24V24H12.500z" fill="url(#wg)" /></svg>,
  <Search key="search" size={24} strokeWidth={2.4} color="#ddd" />,
  <svg key="copilot" width="26" height="25" viewBox="0 0 26 25"><path d="M7 2h8l-4 14H3c-3 0-2-3-1-6 1-4 2-8 5-8z" fill="#24a3d8" /><path d="M3 9h9l-2 7H3c-3 0-2-3 0-7z" fill="#9bd03c" /><path d="M12 2h3c3 0 3 5 4 6h-6z" fill="#1450c8" /><path d="M16 8h5c5 0 3 4 2 8h-9z" fill="#d35bd8" /><path d="M15 10h-3l-2 6h4z" fill="#f06a80" /><rect x="6" y="16" width="19" height="8" rx="1.500" fill="#ffc400" /><text x="15.500" y="22.800" fontSize="7.500" fontWeight="bold" textAnchor="middle" fontFamily="Open Sans" fill="#111">PRE</text></svg>,
  <svg key="view" width="24" height="24" viewBox="0 0 24 24"><path d="M6 1h18v16H6z" fill="#f0f0f0" /><path d="M0 7h18v16H0z" fill="#777" opacity=".85" /><path d="M6 7h12v10H6z" fill="#bbb" /></svg>,
  <svg key="folder" width="25" height="24" viewBox="0 0 25 24"><path d="M0 1h9l2 3H0z" fill="#d89b00" /><path d="M0 4h11l2-2h12v21H0z" fill="#ffd04c" /><path d="M4 22v-4a3 3 0 013-3h10a3 3 0 013 3v4z" fill="#1376c8" /><path d="M7 18h10" stroke="#0a4d90" /></svg>,
  <svg key="edge" width="24" height="24" viewBox="0 0 24 24"><defs><linearGradient id="eg" x1="0" y1=".500" x2="1" y2=".300"><stop stopColor="#1b9de2" /><stop offset="1" stopColor="#5fe05a" /></linearGradient></defs><circle cx="12" cy="12" r="12" fill="#1378cf" /><path d="M0 12C0 4 6 0 12 0c7 0 12 5 12 10 0 4-3 6-6 6s-4-1-3-3c1-4-3-6-6-5-4 0-7 2-9 4z" fill="url(#eg)" /><path d="M9 9c-5 5 0 13 7 13 3 0 5-1 6-3-8 3-12-3-9-7-1-2-2-3-4-3z" fill="#0b4f96" /><path d="M14 13c-1 2 1 3 4 3-3 2-7-1-6-4 1-1 2 0 2 1z" fill="#33251f" /></svg>,
  <svg key="store" width="24" height="24" viewBox="0 0 24 24"><path d="M6.500 6V1.500h11V6" fill="none" stroke="#36b5ee" strokeWidth="2" /><path d="M0 5h24v16a3 3 0 01-3 3H3a3 3 0 01-3-3z" fill="#f3f3f3" /><path d="M7 9h4.500v4.500H7z" fill="#f25022" /><path d="M12.500 9H17v4.500h-4.500z" fill="#7fba00" /><path d="M7 14.500h4.500V19H7z" fill="#00a4ef" /><path d="M12.500 14.500H17V19h-4.500z" fill="#ffb900" /></svg>,
  <svg key="mcafee" width="24" height="24" viewBox="0 0 24 24"><path d="M1 0l11 5L23 0v19l-11 5L1 19zM5.500 6.500v9.500l6.500 3 6.500-3V6.500L12 9.500z" fill="#c1272d" fillRule="evenodd" /></svg>,
  <svg key="firefox" width="24" height="24" viewBox="0 0 24 24"><defs><linearGradient id="fg" x1=".800" y1="0" x2=".300" y2="1"><stop stopColor="#ffe03a" /><stop offset=".500" stopColor="#ff7a1a" /><stop offset="1" stopColor="#f5156c" /></linearGradient></defs><path d="M15 0c3 2 4 5 5 7l1-2c5 8 2 19-9 19C3 24-2 16 1 8l1-3 2 3 3-4c0 2 1 3 3 3 2-2 3-4 5-7z" fill="url(#fg)" /><circle cx="11.500" cy="13" r="5" fill="#7b3fd6" /><path d="M5 11c3-2 5 0 8 0-2 3-4 2-5 4z" fill="#ff9a1f" /></svg>,
  <ChromeIcon key="chrome" />,
];

function Taskbar() {
  return (
    <div className={`flex h-12 items-center border-t border-[#4b3d45] bg-[linear-gradient(90deg,#241c30_0%,#261c34_22%,#2e1a3c_28%,#331b33_38%,#38251f_48%,#3b221c_56%,#481519_63%,#48160f_75%,#3d1812_84%,#311a20_100%)] text-white ${SEGOE}`}>
      <svg width="25" height="24" viewBox="0 0 25 24" className="mb-[3px] ml-[18px]"><circle cx="12.500" cy="12" r="10" fill="#f99a1c" /><path d="M4 8a3 3 0 010-5c2-3 6-2 7 1 4 0 3 4 0 4zM13 21c-4 0-3-5 0-4 1-4 6-4 7-1 4 0 5 5 1 5z" fill="#bcd6ff" /></svg>
      <div className="ml-[7px] w-[80px] pb-[2px] text-[11.300px] leading-4"><div>24°C</div><div className="whitespace-nowrap text-[#cfc8d4]">Partly sunny</div></div>
      <div className="ml-[589px] flex">
        {TASK_ICONS.map((icon, i) => (
          <div key={i} className="relative flex h-11 w-[44.100px] items-center justify-center">
            {icon}
            {i === 4 && <div className="absolute bottom-[2px] h-[3px] w-[6px] rounded bg-[#a0979a]" />}
          </div>
        ))}
        <div className="relative ml-px flex h-10 w-10 items-center justify-center self-center rounded border border-white/5 bg-white/10">
          <ChromeIcon />
          <div className="absolute top-[2px] right-[2px] flex h-4 w-4 items-center justify-center rounded-full bg-[#222]"><PersonIcon size={10} /></div>
          <div className="absolute bottom-0 h-[3px] w-4 rounded bg-[#dda0e0]" />
        </div>
      </div>
      <div className="mr-[21px] ml-auto flex items-center pb-px">
        <ChevronUp size={15} />
        <svg width="17" height="14" viewBox="0 0 17 14" className="ml-[17px]"><path d="M4 12a3 3 0 010-6c1-5 7-6 9-1 4 0 4 7 0 7z" fill="#a3918f" /><path d="M2 1l13 12" stroke="#eee" /></svg>
        <div className="ml-[17px] w-[26px] text-center text-[11.500px] leading-4">ENG<br />IN</div>
        <svg width="17" height="17" viewBox="0 0 17 17" fill="none" stroke="#fff" className="ml-[17px]"><path d="M11 1.500H.500v12h12v-4M4 16.500h8M6 14v2M10 14v2" /><rect x="12" y="1" width="4" height="5" rx="1" /><path d="M14 6v9" /></svg>
        <svg width="16" height="16" viewBox="0 0 16 16" className="ml-[9px]"><path d="M.500 5v5H3l4 3V1L3 5z" fill="none" stroke="#fff" /><circle cx="10.500" cy="10.500" r="4.500" fill="#fff" /><path d="M9 9l3 3M12 9l-3 3" stroke="#321" /></svg>
        <div className="ml-[13px] w-[64px] text-right text-[11.500px] leading-4 whitespace-nowrap">08:47<br />09-02-2024</div>
        <svg width="14" height="16" viewBox="0 0 14 16" fill="#efb8f3" className="ml-[8px]"><path d="M7 0c3.500 0 5 2.500 5 5v4l1.500 3.500H.500L2 9V5c0-2.500 1.500-5 5-5zM5 13.500h4c0 2.500-4 2.500-4 0z" /></svg>
      </div>
    </div>
  );
}

export default function App() {
  return (
    <div className="relative h-[1080px] w-[1920px] overflow-hidden bg-[#212121]">
      <BrowserChrome />
      <MatlabDesktop />
      <Taskbar />
      <DataCleaner />
      <Dock />
    </div>
  );
}
